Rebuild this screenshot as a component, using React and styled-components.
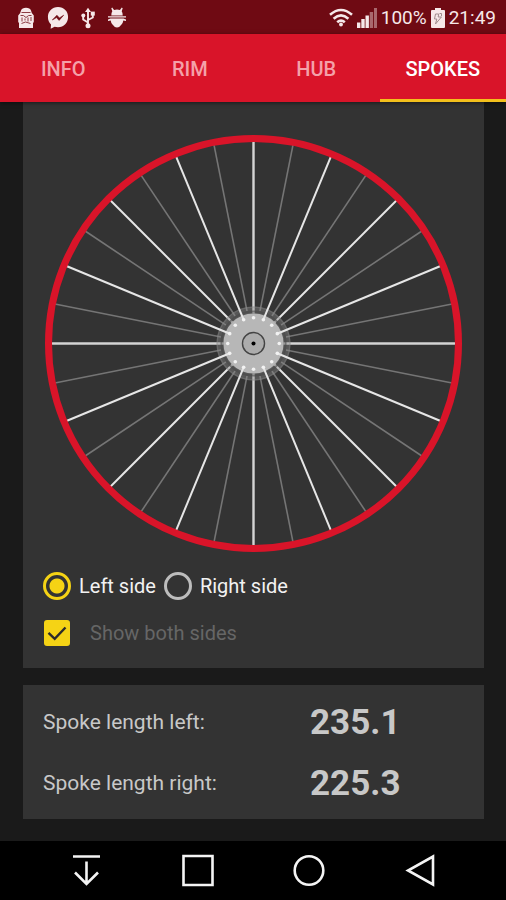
import React, { useState } from "react";
import styled, { createGlobalStyle } from "styled-components";

const GlobalStyle = createGlobalStyle`
  * { box-sizing: border-box; }
  body {
    margin: 0;
    background: #1a1a1a;
    font-family: Roboto, "Liberation Sans", sans-serif;
  }
`;

const Screen = styled.div`
  display: flex;
  flex-direction: column;
  min-height: 100vh;
`;

const StatusBar = styled.header`
  display: flex;
  align-items: center;
  justify-content: space-between;
  height: 34px;
  padding: 2px 10px 0 17px;
  background: #6f0a13;
  color: #f6e8e9;
`;

const StatusLeft = styled.div`
  display: flex;
  align-items: center;
  gap: 12px;
`;

const StatusRight = styled.div`
  display: flex;
  align-items: center;
  gap: 4px;
`;

const StatusText = styled.span`
  font-size: 19px;
  line-height: 24px;
`;

const TabBar = styled.nav`
  display: grid;
  grid-template-columns: repeat(4, 1fr);
  height: 68px;
  background: #d91429;
  box-shadow: 0 1px 4px rgba(0, 0, 0, 0.5);
  z-index: 1;
`;

const Tab = styled.button`
  border: 0;
  border-bottom: 3px solid ${(p) => (p.$active ? "#f3c01c" : "transparent")};
  padding: 5px 0 0;
  background: none;
  color: ${(p) => (p.$active ? "#ffffff" : "#f4a1a9")};
  font: 500 20px/24px Roboto, "Liberation Sans", sans-serif;
  cursor: pointer;
`;

const Content = styled.main`
  display: flex;
  flex: 1;
  flex-direction: column;
  gap: 17px;
  padding: 0 22px 22px 23px;
`;

const WheelCard = styled.section`
  padding: 33px 22px 21px 20px;
  background: #333333;
`;

const WheelFrame = styled.div`
  padding-left: 2px;
`;

const WheelDrawing = styled.svg`
  display: block;
  width: 100%;
  height: auto;
`;

const Options = styled.form`
  display: flex;
  flex-direction: column;
  gap: 19px;
  padding-top: 20px;
`;

const OptionRow = styled.div`
  display: flex;
  align-items: center;
  gap: 8px;
  height: 28px;
`;

const OptionLabel = styled.label`
  display: flex;
  align-items: center;
  gap: ${(p) => (p.$wide ? "20px" : "8px")};
  padding-left: ${(p) => (p.$wide ? "1px" : "0")};
  color: ${(p) => (p.$muted ? "#666666" : "#f2f2f2")};
  font-size: 20px;
  line-height: 24px;
`;

const Radio = styled.input`
  appearance: none;
  width: 28px;
  height: 28px;
  margin: 0;
  border: 3px solid #bdbdbd;
  border-radius: 50%;

  &:checked {
    border-color: #f5d315;
    background: radial-gradient(circle, #f5d315 7px, transparent 8px);
  }
`;

const CheckHolder = styled.span`
  display: grid;
  width: 26px;
  height: 26px;

  & > * { grid-area: 1 / 1; }
`;

const Checkbox = styled.input`
  appearance: none;
  width: 26px;
  height: 26px;
  margin: 0;
  border: 3px solid #f5d315;
  border-radius: 3px;

  &:checked { background: #f5d315; }
  &:not(:checked) + svg { visibility: hidden; }
`;

const CheckMark = styled.svg`
  pointer-events: none;
`;

const ResultCard = styled.dl`
  display: grid;
  grid-template-columns: 267fr 154fr;
  align-items: center;
  margin: 0;
  padding: 7px 20px 5px;
  background: #333333;
  color: #c8c8c8;
`;

const ResultName = styled.dt`
  font-size: 21px;
  line-height: 61px;
`;

const ResultValue = styled.dd`
  margin: 0;
  font-size: 35px;
  font-weight: 700;
  line-height: 61px;
`;

const NavBar = styled.footer`
  display: grid;
  grid-template-columns: repeat(4, 1fr);
  height: 59px;
  padding: 0 29px 0 30px;
  background: #000000;
`;

const NavButton = styled.button`
  display: grid;
  place-items: center;
  border: 0;
  padding: 0;
  background: none;
  color: #f4f4f4;
  cursor: pointer;
`;

const CENTER = 208;

function polar(radius, degrees) {
  const a = (degrees * Math.PI) / 180;
  return [CENTER + radius * Math.sin(a), CENTER - radius * Math.cos(a)];
}

function Spoke({ angle, from, color, width }) {
  const [x1, y1] = polar(from, angle);
  const [x2, y2] = polar(202, angle);
  return <line x1={x1} y1={y1} x2={x2} y2={y2} stroke={color} strokeWidth={width} />;
}

function Wheel({ showBoth }) {
  const angles = Array.from({ length: 16 }, (_, i) => i * 22.5);
  return (
    <WheelDrawing viewBox="0 0 416 416" role="img" aria-label="Spoked wheel">
      {showBoth &&
        angles.map((a) => (
          <Spoke key={a} angle={a + 11.25} from={33} color="#757575" width={1.6} />
        ))}
      {angles
        .filter((_, i) => i % 2 === 0)
        .map((a) => (
          <Spoke key={a} angle={a} from={30} color={a % 90 ? "#e6e6e6" : "#d4d4d4"} width={a % 90 ? 2 : 2.4} />
        ))}
      <circle cx={CENTER} cy={CENTER} r="37" fill="#8a8a8a" fillOpacity="0.42" />
      <circle cx={CENTER} cy={CENTER} r="36.3" fill="none" stroke="#8a8a8a" strokeOpacity="0.35" strokeWidth="1.5" />
      <circle cx={CENTER} cy={CENTER} r="32" fill="none" stroke="#484848" strokeOpacity="0.6" strokeWidth="2" />
      <circle cx={CENTER} cy={CENTER} r="30" fill="#b7b7b7" />
      {angles
        .filter((_, i) => i % 2 === 1)
        .map((a) => (
          <Spoke key={a} angle={a} from={25.5} color="#e6e6e6" width={2} />
        ))}
      {angles.map((a) => {
        const [x, y] = polar(25.7, a);
        return <circle key={a} cx={x} cy={y} r="1.8" fill="#f2f2f2" />;
      })}
      <circle cx={CENTER} cy={CENTER} r="11" fill="#acacac" stroke="#444444" strokeWidth="1.4" />
      <circle cx={CENTER} cy={CENTER} r="2" fill="#000000" />
      <circle cx={CENTER} cy={CENTER} r="204.5" fill="none" stroke="#d91429" strokeWidth="7" />
    </WheelDrawing>
  );
}

function StatusIcons() {
  return (
    <StatusLeft>
      <svg width="18" height="22" viewBox="0 0 18 22" fill="#f6e8e9">
        <path d="M4 3.500Q5 .8 9 .8t5 2.700l.8 2.500 2 2.500v6.500l-.8 1v5H2v-5l-.8-1V8.500l2-2.500z" />
        <path d="M4.500 5.500h9M3.500 8.500q3-1 5.500 2 2.500-3 5.500-2M5 10.500v4M8 11.500v2M11 10.500v4M14 10v4M4.500 16.500l4-1.500 5 1.500" fill="none" stroke="#8d3d44" strokeWidth="1" />
      </svg>
      <svg width="22" height="24" viewBox="0 0 24 24" preserveAspectRatio="none">
        <path d="M12 1C5.500 1 1 5.500 1 11c0 3 1.300 5.600 3.400 7.500L4 22.700l4.300-2c1.200.3 2.400.5 3.700.5 6.500 0 11-4.600 11-10.200S18.500 1 12 1z" fill="#f6e8e9" />
        <path d="M5.800 14l5-4.800 2.800 2.700 4.600-2.700-5 5.200-2.800-2.800z" fill="#6f0a13" stroke="#6f0a13" strokeWidth=".6" />
      </svg>
      <svg width="14" height="22" viewBox="0 0 14 22" fill="none" stroke="#f6e8e9" strokeWidth="1.900">
        <path d="M7 3v15M7 15.500L2.200 12.500V9M7 13l4.800-2.500V7" />
        <path d="M4 5L7 .8 10 5z" fill="#f6e8e9" stroke="none" />
        <circle cx="7" cy="18.700" r="2.500" fill="#f6e8e9" stroke="none" />
        <circle cx="2.300" cy="8.500" r="2" fill="#f6e8e9" stroke="none" />
        <path d="M9.800 4.600h4v4h-4z" fill="#f6e8e9" stroke="none" />
      </svg>
      <svg width="20" height="22" viewBox="0 0 20 22" fill="#f6e8e9">
        <path d="M4.300 1.200l.9-.6 1.900 2.300Q10 2 12.900 2.900l1.900-2.300.9.600-1 3Q15.700 5.500 15.700 8.500H4.300q0-3 1-4.300z" />
        <path d="M1 9.300h18v1.300H1zM3.500 11.400h13l2.500 1.200v1.400l-2.700-.5q-.3 2.500-1.800 4Q12.500 20.500 10 20.500t-4.500-3q-1.500-1.500-1.800-4L1 14v-1.400z" />
      </svg>
    </StatusLeft>
  );
}

function SystemIcons() {
  return (
    <StatusRight>
      <svg width="24" height="20" viewBox="0 0 24 20" fill="none" stroke="#f6e8e9" strokeWidth="2.600">
        <path d="M1 6.800Q12-2.800 23 6.800M4.600 10.700Q12 4.200 19.400 10.700M8.200 14.300Q12 11 15.800 14.300" />
        <circle cx="12" cy="16.500" r="1.900" fill="#f6e8e9" stroke="none" />
      </svg>
      <svg width="20" height="20" viewBox="0 0 20 20" fill="#f6e8e9">
        <path d="M0 14.500h3.400V20H0zM4.300 11h3.400v9H4.300zM8.500 7.500h3.400V20H8.500z" />
        <path d="M12.700 4h3.400v16h-3.400zM17 0h3v20h-3z" fill="#a9686d" />
      </svg>
      <StatusText>100%</StatusText>
      <svg width="14" height="20" viewBox="0 0 14 20">
        <path d="M4 0h6v2h3q1 0 1 1v16q0 1-1 1H1q-1 0-1-1V3q0-1 1-1h3z" fill="#f6e8e9" />
        <path d="M4.500 6h3.200l-.5 3h3.200L4.500 16l1.300-5H3.500zM8.500 5.500h2v2.700" fill="none" stroke="#a08b8d" strokeWidth="1" />
      </svg>
      <StatusText>21:49</StatusText>
    </StatusRight>
  );
}

const TABS = ["INFO", "RIM", "HUB", "SPOKES"];

const NAV_ITEMS = [
  { label: "Hide navigation bar", shape: <path d="M4 3.500h27M17.500 8.500v23M6 19.500L17.500 31 29 19.500" /> },
  { label: "Recent apps", shape: <path d="M2.500 3h29v29h-29z" /> },
  { label: "Home", shape: <circle cx="17" cy="17.500" r="14.300" /> },
  { label: "Back", shape: <path d="M29 3.500v28L4 17.500z" /> },
];

export default function App() {
  const [tab, setTab] = useState("SPOKES");
  const [side, setSide] = useState("left");
  const [showBoth, setShowBoth] = useState(true);

  return (
    <Screen>
      <GlobalStyle />
      <StatusBar>
        <StatusIcons />
        <SystemIcons />
      </StatusBar>
      <TabBar>
        {TABS.map((name) => (
          <Tab key={name} type="button" $active={tab === name} onClick={() => setTab(name)}>
            {name}
          </Tab>
        ))}
      </TabBar>
      <Content>
        <WheelCard>
          <WheelFrame>
            <Wheel showBoth={showBoth} />
          </WheelFrame>
          <Options>
            <OptionRow>
              <OptionLabel>
                <Radio type="radio" name="side" checked={side === "left"} onChange={() => setSide("left")} />
                Left side
              </OptionLabel>
              <OptionLabel>
                <Radio type="radio" name="side" checked={side === "right"} onChange={() => setSide("right")} />
                Right side
              </OptionLabel>
            </OptionRow>
            <OptionRow>
              <OptionLabel $muted $wide>
                <CheckHolder>
                  <Checkbox type="checkbox" checked={showBoth} onChange={() => setShowBoth(!showBoth)} />
                  <CheckMark width="26" height="26" viewBox="0 0 26 26" fill="none" stroke="#2b2b2b" strokeWidth="2.400">
                    <path d="M4.500 12.800l6.200 6L21.500 7.500" />
                  </CheckMark>
                </CheckHolder>
                Show both sides
              </OptionLabel>
            </OptionRow>
          </Options>
        </WheelCard>
        <ResultCard>
          <ResultName>Spoke length left:</ResultName>
          <ResultValue>235.1</ResultValue>
          <ResultName>Spoke length right:</ResultName>
          <ResultValue>225.3</ResultValue>
        </ResultCard>
      </Content>
      <NavBar>
        {NAV_ITEMS.map((item) => (
          <NavButton key={item.label} type="button" aria-label={item.label}>
            <svg width="34" height="35" viewBox="0 0 34 35" fill="none" stroke="currentColor" strokeWidth="2.600">
              {item.shape}
            </svg>
          </NavButton>
        ))}
      </NavBar>
    </Screen>
  );
}
